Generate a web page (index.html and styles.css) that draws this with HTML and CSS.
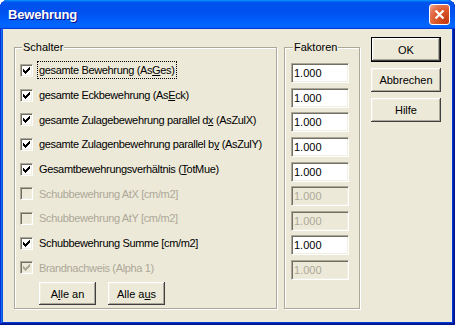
FILE: index.html
```html
<!DOCTYPE html>
<html lang="de">
  <head>
    <meta charset="UTF-8" />
    <title>Bewehrung</title>
    <link rel="stylesheet" href="styles.css">
  </head>
  <body>
    <div class="window">
      <div class="titlebar">
        <span class="title">Bewehrung</span>
        <span class="close">
          <svg width="19" height="19" viewBox="0 0 19 19">
            <path d="M5.5 5.5L13.5 13.5M13.5 5.5L5.5 13.5" stroke="#fff" stroke-width="2.2" />
          </svg>
        </span>
      </div>

      <div class="client">
        <fieldset class="group switches">
          <legend>Schalter</legend>

          <div class="row">
            <span class="check on"><svg width="7" height="7" viewBox="0 0 7 7"><path d="M0 2h1v1h1v1h1v-1h1v-1h1v-1h1v-1h1v3h-1v1h-1v1h-1v1h-1v1h-1v-1h-1v-1h-1z" /></svg></span>
            <span class="label focus">gesamte Bewehrung (As<u>G</u>es)</span>
          </div>
          <div class="row">
            <span class="check on"><svg width="7" height="7" viewBox="0 0 7 7"><path d="M0 2h1v1h1v1h1v-1h1v-1h1v-1h1v-1h1v3h-1v1h-1v1h-1v1h-1v1h-1v-1h-1v-1h-1z" /></svg></span>
            <span class="label">gesamte Eckbewehrung (As<u>E</u>ck)</span>
          </div>
          <div class="row">
            <span class="check on"><svg width="7" height="7" viewBox="0 0 7 7"><path d="M0 2h1v1h1v1h1v-1h1v-1h1v-1h1v-1h1v3h-1v1h-1v1h-1v1h-1v1h-1v-1h-1v-1h-1z" /></svg></span>
            <span class="label">gesamte Zulagebewehrung parallel d<u>x</u> (AsZulX)</span>
          </div>
          <div class="row">
            <span class="check on"><svg width="7" height="7" viewBox="0 0 7 7"><path d="M0 2h1v1h1v1h1v-1h1v-1h1v-1h1v-1h1v3h-1v1h-1v1h-1v1h-1v1h-1v-1h-1v-1h-1z" /></svg></span>
            <span class="label">gesamte Zulagenbewehrung parallel b<u>y</u> (AsZulY)</span>
          </div>
          <div class="row">
            <span class="check on"><svg width="7" height="7" viewBox="0 0 7 7"><path d="M0 2h1v1h1v1h1v-1h1v-1h1v-1h1v-1h1v3h-1v1h-1v1h-1v1h-1v1h-1v-1h-1v-1h-1z" /></svg></span>
            <span class="label">Gesamtbewehrungsverhältnis (<u>T</u>otMue)</span>
          </div>
          <div class="row disabled">
            <span class="check"></span>
            <span class="label">Schubbewehrung AtX [cm/m2]</span>
          </div>
          <div class="row disabled">
            <span class="check"></span>
            <span class="label">Schubbewehrung AtY [cm/m2]</span>
          </div>
          <div class="row">
            <span class="check on"><svg width="7" height="7" viewBox="0 0 7 7"><path d="M0 2h1v1h1v1h1v-1h1v-1h1v-1h1v-1h1v3h-1v1h-1v1h-1v1h-1v1h-1v-1h-1v-1h-1z" /></svg></span>
            <span class="label">Schubbewehrung Summe [cm/m2]</span>
          </div>
          <div class="row disabled">
            <span class="check on"><svg width="7" height="7" viewBox="0 0 7 7"><path d="M0 2h1v1h1v1h1v-1h1v-1h1v-1h1v-1h1v3h-1v1h-1v1h-1v1h-1v1h-1v-1h-1v-1h-1z" /></svg></span>
            <span class="label">Brandnachweis (Alpha 1)</span>
          </div>

          <div class="switch-buttons">
            <button class="btn small">A<u>l</u>le an</button>
            <button class="btn small">Alle a<u>u</u>s</button>
          </div>
        </fieldset>

        <fieldset class="group factors">
          <legend>Faktoren</legend>
          <input class="edit" type="text" value="1.000" />
          <input class="edit" type="text" value="1.000" />
          <input class="edit" type="text" value="1.000" />
          <input class="edit" type="text" value="1.000" />
          <input class="edit" type="text" value="1.000" />
          <input class="edit" type="text" value="1.000" disabled />
          <input class="edit" type="text" value="1.000" disabled />
          <input class="edit" type="text" value="1.000" />
          <input class="edit" type="text" value="1.000" disabled />
        </fieldset>

        <div class="actions">
          <button class="btn default">OK</button>
          <button class="btn">Abbrechen</button>
          <button class="btn">Hilfe</button>
        </div>
      </div>
    </div>
  </body>
</html>
```

FILE: styles.css
```css
body {
  margin: 0;
  background: #fff;
  font-family: "Liberation Sans", Arial, sans-serif;
  font-size: 11px;
  color: #000;
}

.window {
  width: 455px;
  height: 325px;
  display: flex;
  flex-direction: column;
  background: #0831d9;
  border-radius: 8px 8px 0 0;
  overflow: hidden;
  box-shadow: inset -1px -1px #00138c, inset 1px 1px #0831d9, inset -2px -2px #001ea0,
    inset 2px 2px #166aee, inset -3px -3px #003bda, inset 3px 3px #0855dd;
}

.titlebar {
  flex: none;
  height: 29px;
  display: flex;
  align-items: center;
  justify-content: space-between;
  padding: 0 5px 0 8px;
  background: linear-gradient(180deg, #0997ff, #0053ee 8%, #0050ee 40%, #0066ff 88%,
    #0066ff 93%, #005bff 95%, #003dd7 96%, #003dd7);
  color: #fff;
}

.title {
  font-weight: bold;
  font-size: 13px;
  letter-spacing: -0.2px;
  text-shadow: 1px 1px #0f1089;
}

.close {
  width: 21px;
  height: 21px;
  box-sizing: border-box;
  display: flex;
  align-items: center;
  justify-content: center;
  border: 1px solid #fff;
  border-radius: 3px;
  background: radial-gradient(circle at 85% 85%, #c43a12 0%, #dc5a2c 50%, #e47554 75%, #f5b49c 100%);
}

.client {
  flex: 1;
  margin: 0 3px 3px;
  background: #ece9d8;
  display: flex;
  align-items: flex-start;
  padding: 8px 11px 0;
}

.group {
  box-sizing: border-box;
  height: 268px;
  margin: 4px 0 0;
  border: 1px solid #aca899;
  box-shadow: inset 1px 1px #fff, 1px 1px #fff;
  min-width: 0;
}

.group legend {
  margin-left: 2px;
  padding: 0 1px;
  line-height: 13px;
  background: #ece9d8;
}

.switches {
  width: 263px;
  margin-right: 7px;
  padding: 4px 0 0 5px;
}

.row {
  display: flex;
  align-items: center;
  height: 24.7px;
}

.check {
  flex: none;
  width: 13px;
  height: 13px;
  box-sizing: border-box;
  display: flex;
  align-items: center;
  justify-content: center;
  border: 1px solid;
  border-color: #aca899 #fff #fff #aca899;
  box-shadow: inset 1px 1px #716f64, inset -1px -1px #f1efe2;
  background: #fff;
}

.check svg {
  fill: #000;
}

.label {
  margin-left: 4px;
  padding: 1px;
  line-height: 14px;
  letter-spacing: -0.35px;
  border: 1px dotted transparent;
  white-space: nowrap;
}

.label.focus {
  border-color: #000;
}

.disabled .label {
  color: #aca899;
}

.disabled .check {
  background: #ece9d8;
}

.disabled .check svg {
  fill: #aca899;
}

.switch-buttons {
  display: flex;
  gap: 12px;
  margin: 2px 0 0 19px;
}

.btn {
  width: 70px;
  height: 24px;
  padding: 0;
  border: none;
  font-family: "Liberation Sans", Arial, sans-serif;
  font-size: 11px;
  color: #000;
  background: #ece9d8;
  box-shadow: inset -1px -1px #404040, inset 1px 1px #fff, inset -2px -2px #aca899,
    inset 2px 2px #f1efe2;
}

.btn.small {
  width: 57px;
  height: 23px;
}

.btn.default {
  height: 25px;
  box-shadow: inset 0 0 0 1px #000, inset -2px -2px #404040, inset 2px 2px #fff,
    inset -3px -3px #aca899, inset 3px 3px #f1efe2;
}

.factors {
  width: 76px;
  margin-right: 11px;
  padding: 9px 0 0 6px;
  display: flex;
  flex-direction: column;
  gap: 4.625px;
}

.edit {
  width: 58px;
  height: 20px;
  box-sizing: border-box;
  margin: 0;
  padding: 0 0 0 2px;
  border: 1px solid;
  border-color: #aca899 #fff #fff #aca899;
  box-shadow: inset 1px 1px #716f64, inset -1px -1px #f1efe2;
  background: #fff;
  font-family: "Liberation Sans", Arial, sans-serif;
  font-size: 11px;
  color: #000;
  outline: none;
}

.edit:disabled {
  background: #ece9d8;
  color: #aca899;
}

.actions {
  width: 70px;
  display: flex;
  flex-direction: column;
  gap: 6px;
}
```
